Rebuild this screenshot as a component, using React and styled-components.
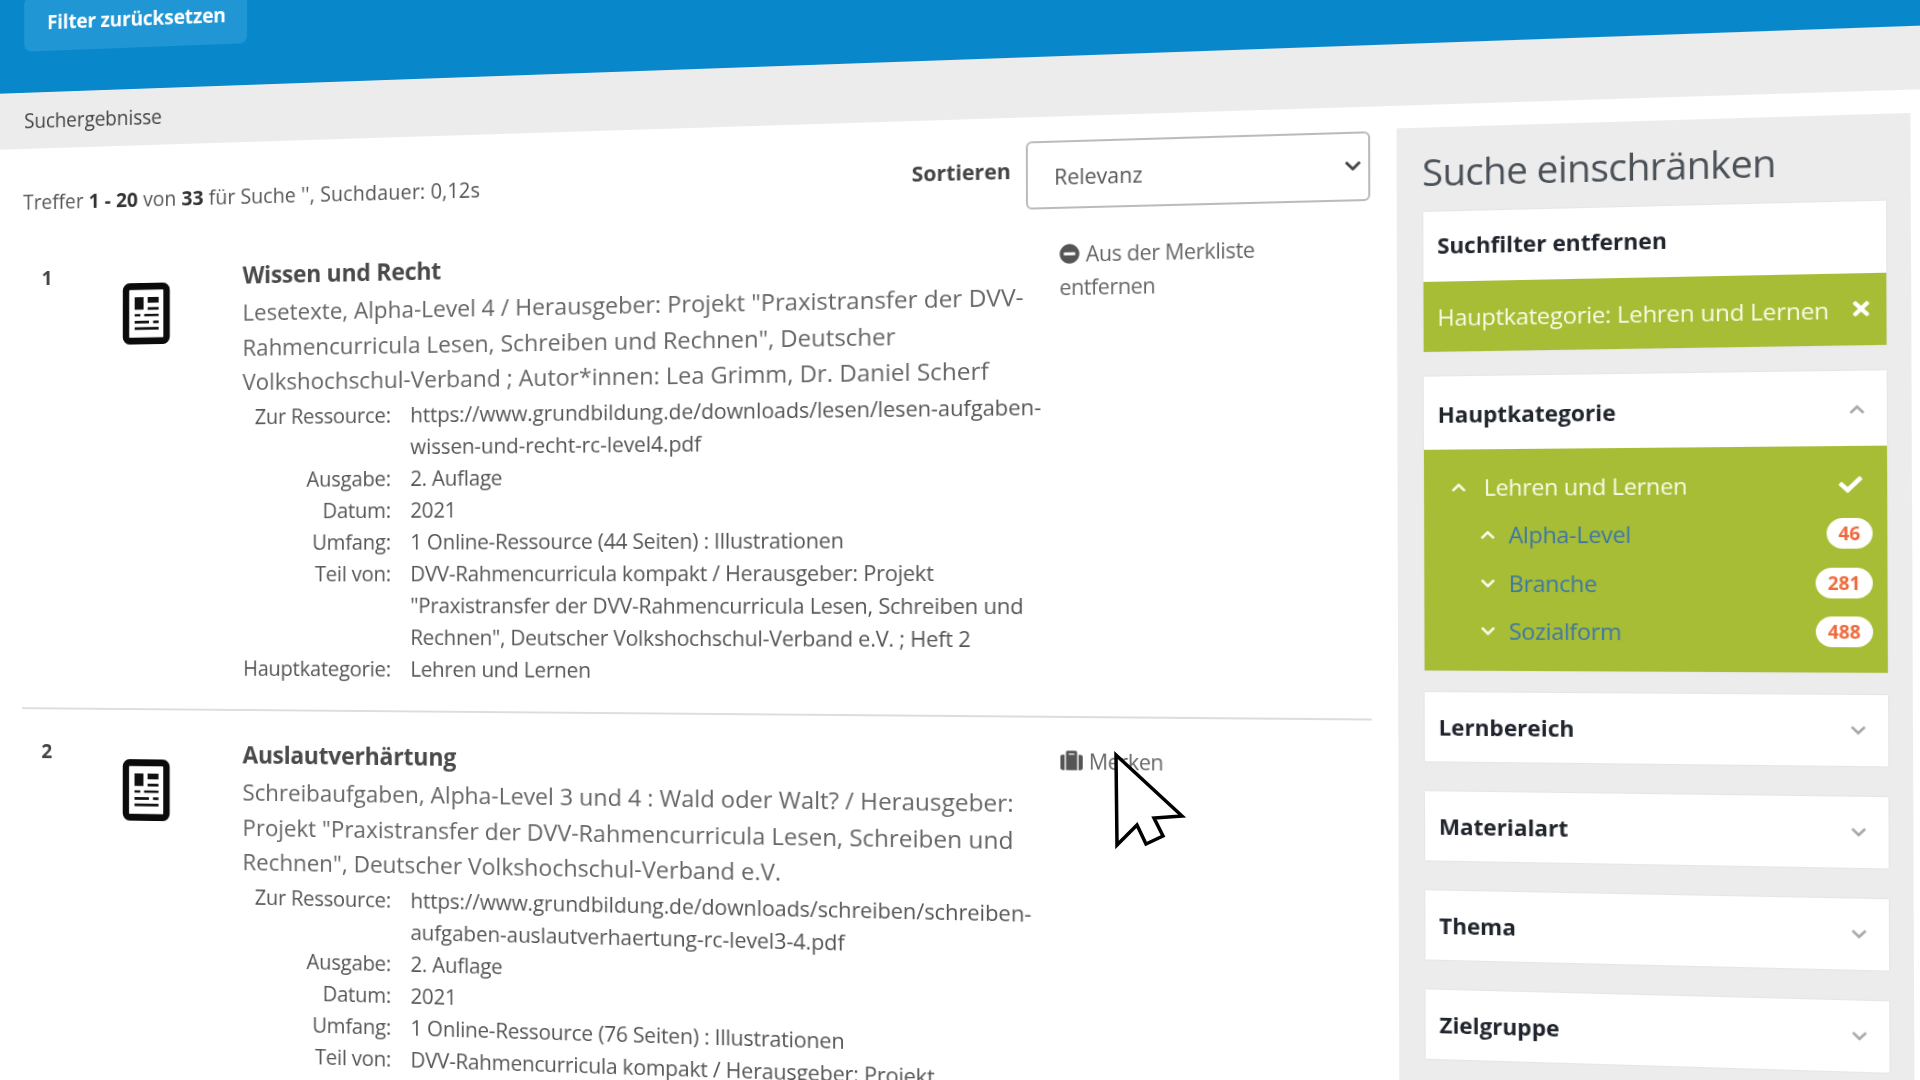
import React from "react";
import styled, { createGlobalStyle } from "styled-components";
import { FaCheck, FaChevronDown, FaChevronUp, FaMinusCircle, FaSuitcase, FaTimes } from "react-icons/fa";

// the screenshot is a tilted view of a flat page, this is that tilt
const g = 6.684e-5;
const h = -2.48e-6;
const s = 0.00176;
const c = 1 + g * 1025.6;
const tilt = [
  1 - 960 * g, -590 * g, 0, -g,
  960 * h + s, 1 + 590 * h, 0, h,
  0, 0, 1, 0,
  960 * c - 1025.6 - 650 * (960 * h + s), 590 * c - 650 - 650 * 590 * h, 0, c - 650 * h,
].join(",");

const GlobalStyle = createGlobalStyle`
  html, body {
    margin: 0;
    background: #ffffff;
    overflow: hidden;
  }
  * {
    box-sizing: border-box;
  }
`;

const Stage = styled.div`
  position: relative;
  width: 1920px;
  height: 1080px;
  overflow: hidden;
`;

// 12px of extra page on the left so the tilt leaves no gap at the window edge
const Page = styled.div`
  width: 1960px;
  height: 1180px;
  display: flex;
  flex-direction: column;
  overflow: hidden;
  background: #ffffff;
  font-family: "Open Sans", "Liberation Sans", sans-serif;
  color: #555555;
  filter: blur(0.4px);
  transform-origin: 0 0;
  transform: matrix3d(${tilt}) translateX(-12px);
`;

const Header = styled.header`
  height: 119px;
  flex: none;
  padding: 17px 0 0 39px;
  background: #0888cb;
`;

const ResetButton = styled.button`
  width: 250px;
  height: 58px;
  border: none;
  border-radius: 8px;
  background: #2096d4;
  color: #ffffff;
  font: 700 21.5px "Open Sans", sans-serif;
  letter-spacing: -0.25px;
  text-align: left;
  padding: 0 0 6px 26px;
`;

const Breadcrumb = styled.div`
  height: 60px;
  flex: none;
  display: flex;
  align-items: center;
  padding: 0 0 1px 39px;
  background: #ececec;
  color: #444444;
  font-size: 21.5px;
  letter-spacing: -0.15px;
`;

const Body = styled.div`
  flex: 1;
  min-height: 0;
  display: flex;
  padding-left: 37px;
  gap: 25px;
`;

const Main = styled.main`
  width: 1401px;
  flex: none;
  padding-top: 24px;
`;

const Toolbar = styled.div`
  height: 68px;
  display: flex;
  align-items: center;
  justify-content: space-between;
`;

const HitCount = styled.div`
  font-size: 21.5px;
  letter-spacing: 0.08px;
  padding: 0 0 4px 1px;
  color: #555555;

  b {
    color: #333333;
    font-weight: 700;
  }
`;

const SortBox = styled.div`
  display: flex;
  align-items: center;
  gap: 15px;
`;

const SortLabel = styled.label`
  margin-bottom: 12px;
  font-size: 21.3px;
  font-weight: 700;
  color: #444444;
`;

const SelectWrap = styled.div`
  position: relative;
  width: 334px;
  height: 68px;

  svg {
    position: absolute;
    right: 8px;
    top: 25px;
    font-size: 17px;
    color: #444444;
    pointer-events: none;
  }
`;

const Select = styled.select`
  appearance: none;
  width: 100%;
  height: 100%;
  padding: 4px 0 0 26px;
  border: 2px solid #bbbbbb;
  border-radius: 6px;
  background: #ffffff;
  color: #555555;
  font: 400 21px "Open Sans", sans-serif;
`;

const Result = styled.article`
  display: grid;
  grid-template-columns: 112px 135px 853px 1fr;
  padding: ${(props) => props.$top}px 0 27px;
  border-bottom: ${(props) => (props.$last ? "none" : "2px solid #dddddd")};
`;

const Rank = styled.div`
  padding-left: 22px;
  margin-top: ${(props) => props.$shift}px;
  font-size: 21.5px;
  line-height: 36px;
  font-weight: 700;
  color: #444444;
`;

const TypeIcon = styled.svg`
  display: block;
  width: 60px;
  height: 65px;
  margin: 25px 0 0 -2px;
`;

const Title = styled.h3`
  margin: 0;
  font-size: 25px;
  line-height: 36px;
  font-weight: 700;
  color: #4a4a4a;
  letter-spacing: -0.3px;
`;

const Description = styled.p`
  margin: 4px 0 0;
  font-size: 24.5px;
  line-height: 36.5px;
  color: #666666;
  letter-spacing: -0.05px;
  white-space: nowrap;
`;

const Details = styled.dl`
  margin: 1.5px 0 0;
  display: grid;
  grid-template-columns: 162px 1fr;
  column-gap: 21px;
  font-size: 22px;
  line-height: 33px;
  letter-spacing: -0.25px;
  white-space: nowrap;

  dt {
    text-align: right;
  }

  dd {
    margin: 0;
    color: #555555;
  }
`;

const ResourceLink = styled.span`
  letter-spacing: -0.1px;
`;

const Action = styled.div`
  font-size: 21px;
  line-height: 33px;
  color: #666666;
  letter-spacing: -0.35px;

  svg {
    vertical-align: -2px;
    margin-right: 6px;
    font-size: ${(props) => props.$icon}px;
    color: #555555;
  }
`;

const Sidebar = styled.aside`
  width: 470px;
  flex: none;
  margin-top: 22px;
  padding: 22px 22px 0 25px;
  background: #ececec;
`;

const SidebarTitle = styled.h2`
  margin: 0 0 16px -1px;
  font-size: 36px;
  line-height: 44px;
  font-weight: 400;
  color: #4a5058;
  letter-spacing: -0.6px;
`;

const Panel = styled.section`
  margin-bottom: ${(props) => props.$gap || 29}px;
  background: #ffffff;
  box-shadow: 0 0 2px #d8d8d8;
`;

const PanelHead = styled.div`
  height: ${(props) => props.$height || 67}px;
  display: flex;
  align-items: center;
  justify-content: space-between;
  padding: ${(props) => props.$pushDown || 0}px 19px ${(props) => props.$pushUp || 0}px 13px;
  font-size: 21px;
  font-weight: 700;
  color: #20242c;

  svg {
    font-size: 15px;
    color: #a9a9a9;
  }
`;

const ActiveFilter = styled.div`
  height: 68px;
  display: flex;
  align-items: center;
  justify-content: space-between;
  padding: 0 12px 1px 13px;
  background: #a6bd35;
  color: #fbfbe8;
  font-size: 22px;
  letter-spacing: -0.25px;

  svg {
    font-size: 21px;
    color: #ffffff;
  }
`;

const FacetList = styled.div`
  height: 214px;
  padding: 13px 13px 0 0;
  background: #a6bd35;
`;

const FacetRow = styled.div`
  height: 46.5px;
  display: flex;
  align-items: center;
  padding-left: ${(props) => props.$indent}px;
  color: ${(props) => (props.$link ? "#3e75a8" : "#fbfbe8")};
  font-size: 21.5px;
  letter-spacing: -0.25px;

  > svg:first-child {
    width: 13px;
    margin-right: ${(props) => (props.$link ? 13 : 17)}px;
    color: #fbfbe8;
  }
`;

const RowEnd = styled.span`
  margin-left: auto;
  margin-right: 9px;
  display: flex;
  color: #ffffff;
  font-size: 21px;
`;

const Count = styled.span`
  margin-left: auto;
  height: 29px;
  padding: 0 11px;
  border-radius: 15px;
  background: #ffffff;
  color: #ee6a3c;
  font-size: 17px;
  font-weight: 700;
  line-height: 29px;
  letter-spacing: 0;
`;

const Cursor = styled.svg`
  position: absolute;
  left: 1105px;
  top: 745px;
  width: 90px;
  height: 110px;
`;

function DocumentIcon() {
  return (
    <TypeIcon viewBox="0 0 147 182">
      <rect x="10" y="10" width="127" height="162" rx="12" fill="none" stroke="#0b0b0b" strokeWidth="20" />
      <g fill="#111111">
        <rect x="37" y="42" width="28" height="37" />
        <rect x="78" y="42" width="34" height="17" />
        <rect x="78" y="72" width="34" height="8" />
        <rect x="37" y="92" width="18" height="7" />
        <rect x="67" y="92" width="45" height="7" />
        <rect x="37" y="112" width="45" height="8" />
        <rect x="95" y="112" width="17" height="8" />
        <rect x="37" y="131" width="75" height="8" />
      </g>
    </TypeIcon>
  );
}

const results = [
  {
    rank: 1,
    top: 29,
    rankShift: -1,
    title: "Wissen und Recht",
    description: [
      'Lesetexte, Alpha-Level 4 / Herausgeber: Projekt "Praxistransfer der DVV-',
      'Rahmencurricula Lesen, Schreiben und Rechnen", Deutscher',
      "Volkshochschul-Verband ; Autor*innen: Lea Grimm, Dr. Daniel Scherf",
    ],
    details: [
      ["Zur Ressource:", ["https://www.grundbildung.de/downloads/lesen/lesen-aufgaben-", "wissen-und-recht-rc-level4.pdf"], true],
      ["Ausgabe:", ["2. Auflage"]],
      ["Datum:", ["2021"]],
      ["Umfang:", ["1 Online-Ressource (44 Seiten) : Illustrationen"]],
      ["Teil von:", ["DVV-Rahmencurricula kompakt / Herausgeber: Projekt", '"Praxistransfer der DVV-Rahmencurricula Lesen, Schreiben und', 'Rechnen", Deutscher Volkshochschul-Verband e.V. ; Heft 2']],
      ["Hauptkategorie:", ["Lehren und Lernen"]],
    ],
  },
  {
    rank: 2,
    top: 27,
    rankShift: -1,
    last: true,
    title: "Auslautverhärtung",
    description: [
      "Schreibaufgaben, Alpha-Level 3 und 4 : Wald oder Walt? / Herausgeber:",
      'Projekt "Praxistransfer der DVV-Rahmencurricula Lesen, Schreiben und',
      'Rechnen", Deutscher Volkshochschul-Verband e.V.',
    ],
    details: [
      ["Zur Ressource:", ["https://www.grundbildung.de/downloads/schreiben/schreiben-", "aufgaben-auslautverhaertung-rc-level3-4.pdf"], true],
      ["Ausgabe:", ["2. Auflage"]],
      ["Datum:", ["2021"]],
      ["Umfang:", ["1 Online-Ressource (76 Seiten) : Illustrationen"]],
      ["Teil von:", ["DVV-Rahmencurricula kompakt / Herausgeber: Projekt"]],
    ],
  },
];

function Lines({ lines }) {
  return lines.map((line) => (
    <React.Fragment key={line}>
      {line}
      <br />
    </React.Fragment>
  ));
}

export default function App() {
  return (
    <Stage>
      <GlobalStyle />
      <Page>
        <Header>
          <ResetButton>Filter zurücksetzen</ResetButton>
        </Header>
        <Breadcrumb>Suchergebnisse</Breadcrumb>
        <Body>
          <Main>
            <Toolbar>
              <HitCount>
                Treffer <b>1 - 20</b> von <b>33</b> für Suche '', Suchdauer: 0,12s
              </HitCount>
              <SortBox>
                <SortLabel>Sortieren</SortLabel>
                <SelectWrap>
                  <Select defaultValue="Relevanz">
                    <option>Relevanz</option>
                  </Select>
                  <FaChevronDown />
                </SelectWrap>
              </SortBox>
            </Toolbar>
            {results.map((result) => (
              <Result key={result.rank} $top={result.top} $last={result.last}>
                <Rank $shift={result.rankShift}>{result.rank}</Rank>
                <div>
                  <DocumentIcon />
                </div>
                <div>
                  <Title>{result.title}</Title>
                  <Description>
                    <Lines lines={result.description} />
                  </Description>
                  <Details>
                    {result.details.map(([label, lines, isLink]) => (
                      <React.Fragment key={label}>
                        <dt>{label}</dt>
                        <dd>
                          {isLink ? (
                            <ResourceLink>
                              <Lines lines={lines} />
                            </ResourceLink>
                          ) : (
                            <Lines lines={lines} />
                          )}
                        </dd>
                      </React.Fragment>
                    ))}
                  </Details>
                </div>
                {result.rank === 1 ? (
                  <Action $icon={20}>
                    <FaMinusCircle />
                    Aus der Merkliste
                    <br />
                    entfernen
                  </Action>
                ) : (
                  <Action $icon={22}>
                    <FaSuitcase />
                    Merken
                  </Action>
                )}
              </Result>
            ))}
          </Main>
          <Sidebar>
            <SidebarTitle>Suche einschränken</SidebarTitle>
            <Panel $gap={24}>
              <PanelHead $height={68} $pushUp={3}>
                Suchfilter entfernen
              </PanelHead>
              <ActiveFilter>
                Hauptkategorie: Lehren und Lernen
                <FaTimes />
              </ActiveFilter>
            </Panel>
            <Panel $gap={21}>
              <PanelHead $height={71} $pushDown={2}>
                Hauptkategorie
                <FaChevronUp />
              </PanelHead>
              <FacetList>
                <FacetRow $indent={26}>
                  <FaChevronUp />
                  Lehren und Lernen
                  <RowEnd>
                    <FaCheck />
                  </RowEnd>
                </FacetRow>
                <FacetRow $indent={53} $link>
                  <FaChevronUp />
                  Alpha-Level
                  <Count>46</Count>
                </FacetRow>
                <FacetRow $indent={53} $link>
                  <FaChevronDown />
                  Branche
                  <Count>281</Count>
                </FacetRow>
                <FacetRow $indent={53} $link>
                  <FaChevronDown />
                  Sozialform
                  <Count>488</Count>
                </FacetRow>
              </FacetList>
            </Panel>
            {["Lernbereich", "Materialart", "Thema", "Zielgruppe"].map((name) => (
              <Panel key={name}>
                <PanelHead>
                  {name}
                  <FaChevronDown />
                </PanelHead>
              </Panel>
            ))}
          </Sidebar>
        </Body>
      </Page>
      <Cursor viewBox="0 0 90 110">
        <path d="M11 10 L12 100 L32 80 L41 99 L58 91 L49 73 L77 71 Z" fill="#ffffff" stroke="#000000" strokeWidth="3.5" />
      </Cursor>
    </Stage>
  );
}
